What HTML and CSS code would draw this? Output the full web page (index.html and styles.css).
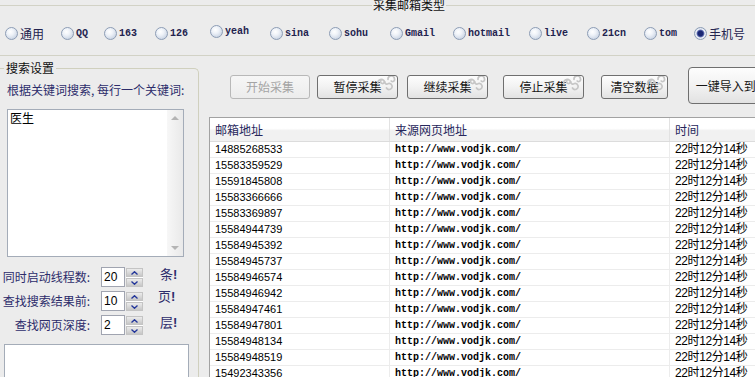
FILE: index.html
```html
<!DOCTYPE html>
<html lang="zh-CN">
<head>
<meta charset="utf-8">
<title>采集邮箱</title>
<link rel="stylesheet" href="styles.css">
</head>
<body>
<fieldset class="type-group">
  <legend>采集邮箱类型</legend>
  <div class="radios">
    <label class="radio"><span class="dot"></span><span class="cjk">通用</span></label>
    <label class="radio"><span class="dot"></span><span class="lat">QQ</span></label>
    <label class="radio"><span class="dot"></span><span class="lat">163</span></label>
    <label class="radio"><span class="dot"></span><span class="lat">126</span></label>
    <label class="radio raised"><span class="dot"></span><span class="lat">yeah</span></label>
    <label class="radio"><span class="dot"></span><span class="lat">sina</span></label>
    <label class="radio"><span class="dot"></span><span class="lat">sohu</span></label>
    <label class="radio"><span class="dot"></span><span class="lat">Gmail</span></label>
    <label class="radio"><span class="dot"></span><span class="lat">hotmail</span></label>
    <label class="radio"><span class="dot"></span><span class="lat">live</span></label>
    <label class="radio"><span class="dot"></span><span class="lat">21cn</span></label>
    <label class="radio"><span class="dot"></span><span class="lat">tom</span></label>
    <label class="radio"><span class="dot on"></span><span class="cjk">手机号</span></label>
  </div>
</fieldset>

<div class="main">
  <fieldset class="search-group">
    <legend>搜索设置</legend>
    <div class="kw-label">根据关键词搜索, 每行一个关键词:</div>
    <div class="kw-box">
      <div class="kw-text">医生</div>
      <div class="vscroll"><span class="arr up"></span><span class="arr down"></span></div>
    </div>
    <div class="spins">
      <div class="sp-label">同时启动线程数:</div>
      <div class="sp-input">20</div>
      <div class="sp-btns">
        <span class="sp-b"><svg viewBox="0 0 7 4"><path d="M0.5 3.5 L3.5 0.7 L6.5 3.5"/></svg></span>
        <span class="sp-b"><svg viewBox="0 0 7 4"><path d="M0.5 0.5 L3.5 3.3 L6.5 0.5"/></svg></span>
      </div>
      <div class="sp-unit">条<b>!</b></div>

      <div class="sp-label">查找搜索结果前:</div>
      <div class="sp-input">10</div>
      <div class="sp-btns">
        <span class="sp-b"><svg viewBox="0 0 7 4"><path d="M0.5 3.5 L3.5 0.7 L6.5 3.5"/></svg></span>
        <span class="sp-b"><svg viewBox="0 0 7 4"><path d="M0.5 0.5 L3.5 3.3 L6.5 0.5"/></svg></span>
      </div>
      <div class="sp-unit up2">页<b>!</b></div>

      <div class="sp-label">查找网页深度:</div>
      <div class="sp-input">2</div>
      <div class="sp-btns">
        <span class="sp-b"><svg viewBox="0 0 7 4"><path d="M0.5 3.5 L3.5 0.7 L6.5 3.5"/></svg></span>
        <span class="sp-b"><svg viewBox="0 0 7 4"><path d="M0.5 0.5 L3.5 3.3 L6.5 0.5"/></svg></span>
      </div>
      <div class="sp-unit">层<b>!</b></div>
    </div>
    <div class="log-box"></div>
  </fieldset>

  <div class="work">
    <div class="toolbar">
      <button class="btn disabled b-start">开始采集</button>
      <button class="btn b-pause">暂停采集<svg class="swirl" viewBox="0 0 20 15"><path d="M2 8.5 A3.5 3.5 0 1 1 8.5 5.5 A2 2 0 1 1 5.2 4"/><path d="M8.5 5.5 Q9.5 9.5 12.5 7.5 A3 3 0 1 1 10.5 12"/><path d="M12 3.5 A3 3 0 0 1 18.5 3 A2 2 0 0 1 15.2 5"/></svg></button>
      <button class="btn b-resume">继续采集<svg class="swirl" viewBox="0 0 20 15"><path d="M2 8.5 A3.5 3.5 0 1 1 8.5 5.5 A2 2 0 1 1 5.2 4"/><path d="M8.5 5.5 Q9.5 9.5 12.5 7.5 A3 3 0 1 1 10.5 12"/><path d="M12 3.5 A3 3 0 0 1 18.5 3 A2 2 0 0 1 15.2 5"/></svg></button>
      <button class="btn b-stop">停止采集<svg class="swirl" viewBox="0 0 20 15"><path d="M2 8.5 A3.5 3.5 0 1 1 8.5 5.5 A2 2 0 1 1 5.2 4"/><path d="M8.5 5.5 Q9.5 9.5 12.5 7.5 A3 3 0 1 1 10.5 12"/><path d="M12 3.5 A3 3 0 0 1 18.5 3 A2 2 0 0 1 15.2 5"/></svg></button>
      <button class="btn b-clear">清空数据<svg class="swirl" viewBox="0 0 20 15"><path d="M2 8.5 A3.5 3.5 0 1 1 8.5 5.5 A2 2 0 1 1 5.2 4"/><path d="M8.5 5.5 Q9.5 9.5 12.5 7.5 A3 3 0 1 1 10.5 12"/><path d="M12 3.5 A3 3 0 0 1 18.5 3 A2 2 0 0 1 15.2 5"/></svg></button>
      <button class="btn b-export">一键导入到Excel</button>
    </div>

    <div class="grid">
      <div class="row head"><div>邮箱地址</div><div>来源网页地址</div><div>时间</div></div>
      <div class="row"><div class="c1">14885268533</div><div class="c2">http://www.vodjk.com/</div><div class="c3">22时12分14秒</div></div>
      <div class="row"><div class="c1">15583359529</div><div class="c2">http://www.vodjk.com/</div><div class="c3">22时12分14秒</div></div>
      <div class="row"><div class="c1">15591845808</div><div class="c2">http://www.vodjk.com/</div><div class="c3">22时12分14秒</div></div>
      <div class="row"><div class="c1">15583366666</div><div class="c2">http://www.vodjk.com/</div><div class="c3">22时12分14秒</div></div>
      <div class="row"><div class="c1">15583369897</div><div class="c2">http://www.vodjk.com/</div><div class="c3">22时12分14秒</div></div>
      <div class="row"><div class="c1">15584944739</div><div class="c2">http://www.vodjk.com/</div><div class="c3">22时12分14秒</div></div>
      <div class="row"><div class="c1">15584945392</div><div class="c2">http://www.vodjk.com/</div><div class="c3">22时12分14秒</div></div>
      <div class="row"><div class="c1">15584945737</div><div class="c2">http://www.vodjk.com/</div><div class="c3">22时12分14秒</div></div>
      <div class="row"><div class="c1">15584946574</div><div class="c2">http://www.vodjk.com/</div><div class="c3">22时12分14秒</div></div>
      <div class="row"><div class="c1">15584946942</div><div class="c2">http://www.vodjk.com/</div><div class="c3">22时12分14秒</div></div>
      <div class="row"><div class="c1">15584947461</div><div class="c2">http://www.vodjk.com/</div><div class="c3">22时12分14秒</div></div>
      <div class="row"><div class="c1">15584947801</div><div class="c2">http://www.vodjk.com/</div><div class="c3">22时12分14秒</div></div>
      <div class="row"><div class="c1">15584948134</div><div class="c2">http://www.vodjk.com/</div><div class="c3">22时12分14秒</div></div>
      <div class="row"><div class="c1">15584948519</div><div class="c2">http://www.vodjk.com/</div><div class="c3">22时12分14秒</div></div>
      <div class="row"><div class="c1">15492343356</div><div class="c2">http://www.vodjk.com/</div><div class="c3">22时12分14秒</div></div>
    </div>
  </div>
</div>
</body>
</html>
```

FILE: styles.css
```css
* { box-sizing: border-box; }
html, body { margin: 0; padding: 0; }
body {
  width: 755px;
  height: 377px;
  overflow: hidden;
  background: #ececec;
  font-family: "Noto Sans CJK SC", sans-serif;
  font-size: 12px;
  color: #111;
}

/* ---------- top group: mail types ---------- */
.type-group {
  margin: -3px 0 0;
  padding: 0 0 2px;
  min-width: 0;
  border: 0;
  border-top: 1px solid #d2d2c6;
  border-bottom: 1px solid #d2d2c6;
}
.type-group legend {
  margin-left: 372px;
  padding: 0 1px;
  line-height: 16px;
  font-size: 12px;
  color: #111;
}
.radios {
  display: grid;
  grid-template-columns: 56px 43px 51px 55px 60px 59px 61px 63px 76px 58px 57px 50px auto;
  height: 40px;
  align-items: center;
  padding-left: 5px;
}
.radio {
  display: flex;
  align-items: center;
  color: #23234f;
  white-space: nowrap;
}
.radio.raised { margin-top: -3px; }
.dot {
  flex: none;
  width: 13px;
  height: 13px;
  margin-right: 2px;
  border-radius: 50%;
  border: 1px solid #8d9db5;
  background: radial-gradient(circle at 40% 35%, #ffffff 0, #eef2f8 35%, #b9c6da 100%);
}
.dot.on {
  background: radial-gradient(circle, #1a2774 0, #1a2774 2.4px, #5a68ae 3.4px, #eef2f8 4.4px, #b9c6da 100%);
}
.lat {
  font-family: "Liberation Mono", monospace;
  font-size: 10px;
  font-weight: bold;
}
.cjk { font-size: 12px; }

/* ---------- main area ---------- */
.main {
  display: flex;
  align-items: flex-start;
}

.search-group {
  flex: none;
  width: 199px;
  height: 330px;
  margin: 5px 0 0;
  padding: 0;
  min-width: 0;
  border: 0;
  border-top: 1px solid #d0d0be;
  border-right: 1px solid #d0d0be;
  border-top-right-radius: 5px;
}
.search-group legend {
  margin-left: 4px;
  padding: 0 2px;
  line-height: 14px;
  font-size: 12px;
  color: #111;
}
.kw-label {
  margin: 7px 0 0 7px;
  line-height: 16px;
  color: #2d2d6b;
  white-space: nowrap;
}
.kw-box {
  display: flex;
  width: 177px;
  height: 148px;
  margin: 11px 0 0 7px;
  border: 1px solid #a4acb8;
  background: #fff;
}
.kw-text {
  flex: 1;
  padding: 1px 2px;
  line-height: 14px;
  color: #000;
}
.vscroll {
  flex: none;
  width: 16px;
  display: flex;
  flex-direction: column;
  justify-content: space-between;
  align-items: center;
  padding: 6px 0 6px;
  background: linear-gradient(to right, #f7f7f7, #e9e9e9);
}
.arr {
  width: 0;
  height: 0;
  border-left: 4px solid transparent;
  border-right: 4px solid transparent;
}
.arr.up { border-bottom: 4px solid #b4b4b4; }
.arr.down { border-top: 4px solid #b4b4b4; }

.spins {
  display: grid;
  grid-template-columns: 90px auto auto auto;
  grid-auto-rows: 20px;
  row-gap: 4px;
  margin-top: 10px;
  justify-content: start;
}
.sp-label {
  justify-self: end;
  align-self: center;
  color: #2d2d6b;
  white-space: nowrap;
  line-height: 16px;
}
.sp-input {
  width: 24px;
  height: 20px;
  margin-left: 11px;
  padding-left: 2px;
  border: 1px solid #a0a4b0;
  background: #fff;
  font-family: "Liberation Sans", sans-serif;
  font-size: 12px;
  line-height: 18px;
  color: #000;
}
.sp-btns {
  display: flex;
  flex-direction: column;
  gap: 1px;
  width: 17px;
  height: 19px;
  margin: 1px 0 0 1px;
  background: #fff;
}
.sp-b {
  flex: 1;
  display: flex;
  align-items: center;
  justify-content: center;
  border: 1px solid #c4c4c4;
  background: linear-gradient(#ececec, #c6c6c6);
}
.sp-b svg {
  width: 7px;
  height: 4px;
  fill: none;
  stroke: #22359a;
  stroke-width: 1.3;
}
.sp-unit {
  align-self: start;
  margin: 0 0 0 17px;
  line-height: 14px;
  color: #2d2d6b;
  font-size: 13px;
}
.sp-unit.up2 { margin-top: -2px; margin-left: 15px; }
.sp-unit b { font-family: "Liberation Sans", sans-serif; }

.log-box {
  width: 185px;
  height: 60px;
  margin: 9px 0 0 4px;
  border: 1px solid #a4acb8;
  background: #fff;
}

/* ---------- work area ---------- */
.work {
  flex: none;
  width: 600px;
  margin-left: 10px;
}
.toolbar {
  display: flex;
  align-items: flex-start;
  height: 37px;
  margin-top: 11px;
}
.btn {
  position: relative;
  flex: none;
  width: 81px;
  height: 24px;
  margin-top: 8px;
  padding: 0;
  border: 1px solid #6f6f6f;
  border-radius: 3px;
  background: linear-gradient(#fdfdfd, #f2f2f2 50%, #e2e2e2);
  font-family: "Noto Sans CJK SC", sans-serif;
  font-size: 12px;
  color: #161616;
  line-height: 20px;
  white-space: nowrap;
  overflow: hidden;
}
.btn.disabled {
  border-color: #b8b8b8;
  background: linear-gradient(#f6f6f6, #ececec);
  color: #a4a4a4;
}
.swirl {
  position: absolute;
  top: 0;
  right: 1px;
  width: 20px;
  height: 15px;
  fill: none;
  stroke: #c6c6c6;
  stroke-width: 1.7;
  stroke-linecap: round;
}
.b-start { width: 80px; margin-left: 21px; }
.b-pause { margin-left: 7px; }
.b-resume { margin-left: 9px; }
.b-stop { margin-left: 15px; }
.b-clear { width: 67px; margin-left: 17px; }
.b-export {
  width: 104px;
  height: 37px;
  margin-top: 0;
  margin-left: 20px;
  line-height: 33px;
  border-radius: 4px;
}

/* ---------- data table ---------- */
.grid {
  width: 600px;
  margin-top: 13px;
  border-top: 1px solid #a2a2a2;
  border-left: 1px solid #a2a2a2;
  background: #fff;
}
.row {
  display: grid;
  grid-template-columns: 180px 280px 1fr;
  height: 16px;
  border-bottom: 1px solid #ececec;
}
.row > div {
  padding-left: 5px;
  border-right: 1px solid #ececec;
  line-height: 15px;
  white-space: nowrap;
  overflow: hidden;
  color: #000;
}
.row.head {
  height: 24px;
  background: linear-gradient(#ffffff 0, #ffffff 45%, #f1f1f1 55%, #f1f1f1 100%);
  border-bottom: 1px solid #dcdcdc;
}
.row.head > div {
  line-height: 23px;
  color: #27275c;
  border-right-color: #e2e2e2;
}
.c1 {
  font-family: "Liberation Sans", sans-serif;
  font-size: 11px;
}
.c2 {
  font-family: "Liberation Mono", monospace;
  font-size: 10px;
  font-weight: bold;
}
.c3 {
  font-family: "Liberation Sans", "Noto Sans CJK SC", sans-serif;
  font-size: 12px;
  letter-spacing: -0.4px;
}
```
